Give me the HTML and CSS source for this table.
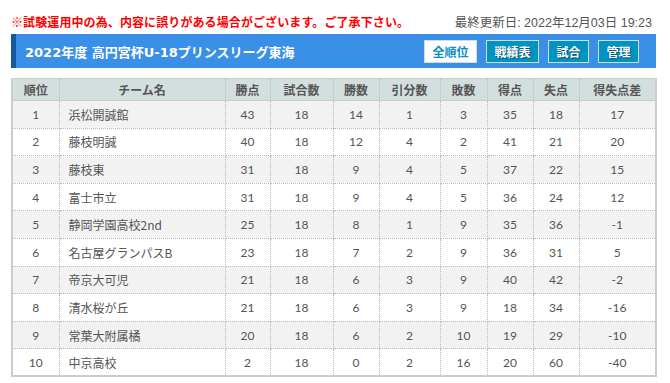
FILE: index.html
```html
<!DOCTYPE html>
<html lang="ja">
<head>
<meta charset="utf-8">
<title>2022年度 高円宮杯U-18プリンスリーグ東海</title>
<link rel="stylesheet" href="styles.css">
</head>
<body>
<div class="page">
  <div class="notice-row">
    <p class="notice">※試験運用中の為、内容に誤りがある場合がございます。ご了承下さい。</p>
    <p class="updated">最終更新日: 2022年12月03日 19:23</p>
  </div>
  <div class="title-bar">
    <h1 class="title">2022年度 高円宮杯U-18プリンスリーグ東海</h1>
    <nav class="actions">
      <a class="btn btn-wide btn-active">全順位</a>
      <a class="btn btn-wide">戦績表</a>
      <a class="btn btn-narrow">試合</a>
      <a class="btn btn-narrow">管理</a>
    </nav>
  </div>
  <table class="standings">
    <colgroup>
      <col class="c-rank"><col class="c-team"><col class="c-pts"><col class="c-gp"><col class="c-w"><col class="c-d"><col class="c-l"><col class="c-gf"><col class="c-ga"><col class="c-gd">
    </colgroup>
    <thead>
      <tr><th>順位</th><th>チーム名</th><th>勝点</th><th>試合数</th><th>勝数</th><th>引分数</th><th>敗数</th><th>得点</th><th>失点</th><th>得失点差</th></tr>
    </thead>
    <tbody>
      <tr><td>1</td><td class="team">浜松開誠館</td><td>43</td><td>18</td><td>14</td><td>1</td><td>3</td><td>35</td><td>18</td><td>17</td></tr>
      <tr><td>2</td><td class="team">藤枝明誠</td><td>40</td><td>18</td><td>12</td><td>4</td><td>2</td><td>41</td><td>21</td><td>20</td></tr>
      <tr><td>3</td><td class="team">藤枝東</td><td>31</td><td>18</td><td>9</td><td>4</td><td>5</td><td>37</td><td>22</td><td>15</td></tr>
      <tr><td>4</td><td class="team">富士市立</td><td>31</td><td>18</td><td>9</td><td>4</td><td>5</td><td>36</td><td>24</td><td>12</td></tr>
      <tr><td>5</td><td class="team">静岡学園高校2nd</td><td>25</td><td>18</td><td>8</td><td>1</td><td>9</td><td>35</td><td>36</td><td>-1</td></tr>
      <tr><td>6</td><td class="team">名古屋グランパスB</td><td>23</td><td>18</td><td>7</td><td>2</td><td>9</td><td>36</td><td>31</td><td>5</td></tr>
      <tr><td>7</td><td class="team">帝京大可児</td><td>21</td><td>18</td><td>6</td><td>3</td><td>9</td><td>40</td><td>42</td><td>-2</td></tr>
      <tr><td>8</td><td class="team">清水桜が丘</td><td>21</td><td>18</td><td>6</td><td>3</td><td>9</td><td>18</td><td>34</td><td>-16</td></tr>
      <tr><td>9</td><td class="team">常葉大附属橘</td><td>20</td><td>18</td><td>6</td><td>2</td><td>10</td><td>19</td><td>29</td><td>-10</td></tr>
      <tr><td>10</td><td class="team">中京高校</td><td>2</td><td>18</td><td>0</td><td>2</td><td>16</td><td>20</td><td>60</td><td>-40</td></tr>
    </tbody>
  </table>
</div>
</body>
</html>
```

FILE: styles.css
```css
* { box-sizing: border-box; }
html, body { margin: 0; padding: 0; background: #fff; }
body {
  font-family: Lato, "Noto Sans CJK JP", sans-serif;
  color: #555;
}
.page {
  width: 645px;
  margin-left: 11px;
  padding-top: 12px;
}
.notice-row {
  display: flex;
  justify-content: space-between;
  align-items: center;
  height: 18px;
  padding-right: 4px;
}
.notice {
  margin: 0;
  font-family: "Noto Sans CJK JP", sans-serif;
  font-size: 12px;
  font-weight: 700;
  color: #f00;
  letter-spacing: 0.1px;
}
.updated {
  margin: 0;
  font-family: "Liberation Sans", "Noto Sans CJK JP", sans-serif;
  font-size: 12.5px;
  color: #555;
}
.title-bar {
  margin-top: 4px;
  height: 34px;
  background: #3990e6;
  border-left: 5px solid #1558a0;
  display: flex;
  align-items: center;
  justify-content: space-between;
  padding-left: 9px;
  padding-right: 17px;
}
.title {
  margin: 0;
  font-family: "DejaVu Sans", "Noto Sans CJK JP", sans-serif;
  font-size: 13px;
  font-weight: 700;
  color: #fff;
  letter-spacing: 0;
}
.actions {
  display: flex;
  gap: 9px;
  margin-top: 1px;
}
.btn {
  display: flex;
  align-items: center;
  justify-content: center;
  height: 23px;
  padding: 0;
  background: #0094c4;
  border: 1px solid #d8d8d8;
  color: #fff;
  font-family: "Noto Sans CJK JP", sans-serif;
  font-size: 12px;
  font-weight: 700;
  text-shadow: 1px 1px 1px #124a66;
  cursor: pointer;
}
.btn-wide { width: 53px; }
.btn-narrow { width: 41px; }
.btn-active {
  background: #fff;
  color: #0b8fc6;
  text-shadow: none;
}
.standings {
  margin-top: 10px;
  width: 644px;
  border-collapse: collapse;
  table-layout: fixed;
  font-size: 12px;
  border: 2px solid #ccc;
  border-top-width: 1px;
}
.c-rank { width: 47px; }
.c-team { width: 166px; }
.c-pts { width: 45px; }
.c-gp { width: 63px; }
.c-w { width: 46px; }
.c-d { width: 61px; }
.c-l { width: 47px; }
.c-gf { width: 46px; }
.c-ga { width: 46px; }
.c-gd { width: 77px; }
.standings th {
  height: 22px;
  background: #d3dfdf;
  font-family: "Noto Sans CJK JP", sans-serif;
  font-weight: 700;
  color: #555;
  font-size: 12px;
  padding: 0;
  border-left: 1px dotted #bbb;
  border-right: 1px dotted #bbb;
  border-bottom: 1px solid #ccc;
}
.standings td {
  height: 27.6px;
  padding: 0;
  text-align: center;
  border: 1px dotted #bbb;
  color: #555;
}
.standings td.team {
  text-align: left;
  padding-left: 9px;
  font-family: "Noto Sans CJK JP", sans-serif;
  font-size: 12px;
}
.standings tbody tr:nth-child(odd) td { background: #f2f2f2; }
```
